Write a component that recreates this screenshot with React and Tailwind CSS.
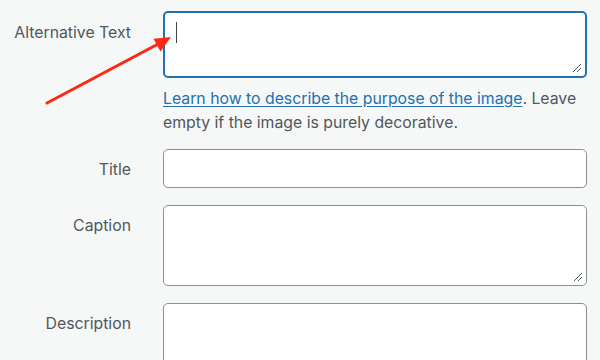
import React from "react";

function Grip() {
  return (
    <svg className="absolute right-[3px] bottom-[3px]" width="10" height="10" viewBox="0 0 10 10">
      <line x1="1" y1="9" x2="9" y2="1" stroke="#50575e" strokeWidth="1" />
      <line x1="5" y1="9" x2="9" y2="5" stroke="#50575e" strokeWidth="1" />
    </svg>
  );
}

export default function App() {
  return (
    <div
      className="relative w-[600px] h-[360px] overflow-hidden bg-[#f6f7f7] text-[15.8px] text-[#50575e]"
      style={{ fontFamily: 'Inter, "Liberation Sans", Arial, sans-serif' }}
    >
      <div className="pt-[11px] flex flex-col">
        {/* Alternative text */}
        <div className="grid grid-cols-[131px_424px] gap-x-[32px]">
          <div className="text-right pt-[10px] leading-[24px] whitespace-nowrap">Alternative Text</div>
          <div>
            <div className="relative h-[67px] bg-white rounded-[5px] border-2 border-[#2271b1]">
              <div className="absolute left-[11px] top-[9px] w-[1px] h-[21px] bg-[#3c434a]" />
              <Grip />
            </div>
            <div className="mt-[9px] leading-[24px]">
              <span className="text-[#2271b1] underline underline-offset-[2px]">Learn how to describe the purpose of the image</span>. Leave empty if the image is purely decorative.
            </div>
          </div>
        </div>

        {/* Title */}
        <div className="grid grid-cols-[131px_424px] gap-x-[32px] mt-[14px]">
          <div className="text-right pt-[9px] leading-[24px]">Title</div>
          <div className="h-[39px] bg-white rounded-[5px] border border-[#8c8f94]" />
        </div>

        {/* Caption */}
        <div className="grid grid-cols-[131px_424px] gap-x-[32px] mt-[17px]">
          <div className="text-right pt-[9px] leading-[24px]">Caption</div>
          <div className="relative h-[81px] bg-white rounded-[5px] border border-[#8c8f94]">
            <Grip />
          </div>
        </div>

        {/* Description */}
        <div className="grid grid-cols-[131px_424px] gap-x-[32px] mt-[17px]">
          <div className="text-right pt-[9px] leading-[24px]">Description</div>
          <div className="relative h-[81px] bg-white rounded-[5px] border border-[#8c8f94]" />
        </div>
      </div>

      {/* Red annotation arrow */}
      <svg className="absolute left-0 top-0 pointer-events-none" width="600" height="360" viewBox="0 0 600 360">
        <line x1="47" y1="103" x2="160" y2="43" stroke="#fe2712" strokeWidth="3" strokeLinecap="round" />
        <polygon points="171,37 153.5,38.8 160.5,51.5" fill="#fe2712" />
      </svg>
    </div>
  );
}
